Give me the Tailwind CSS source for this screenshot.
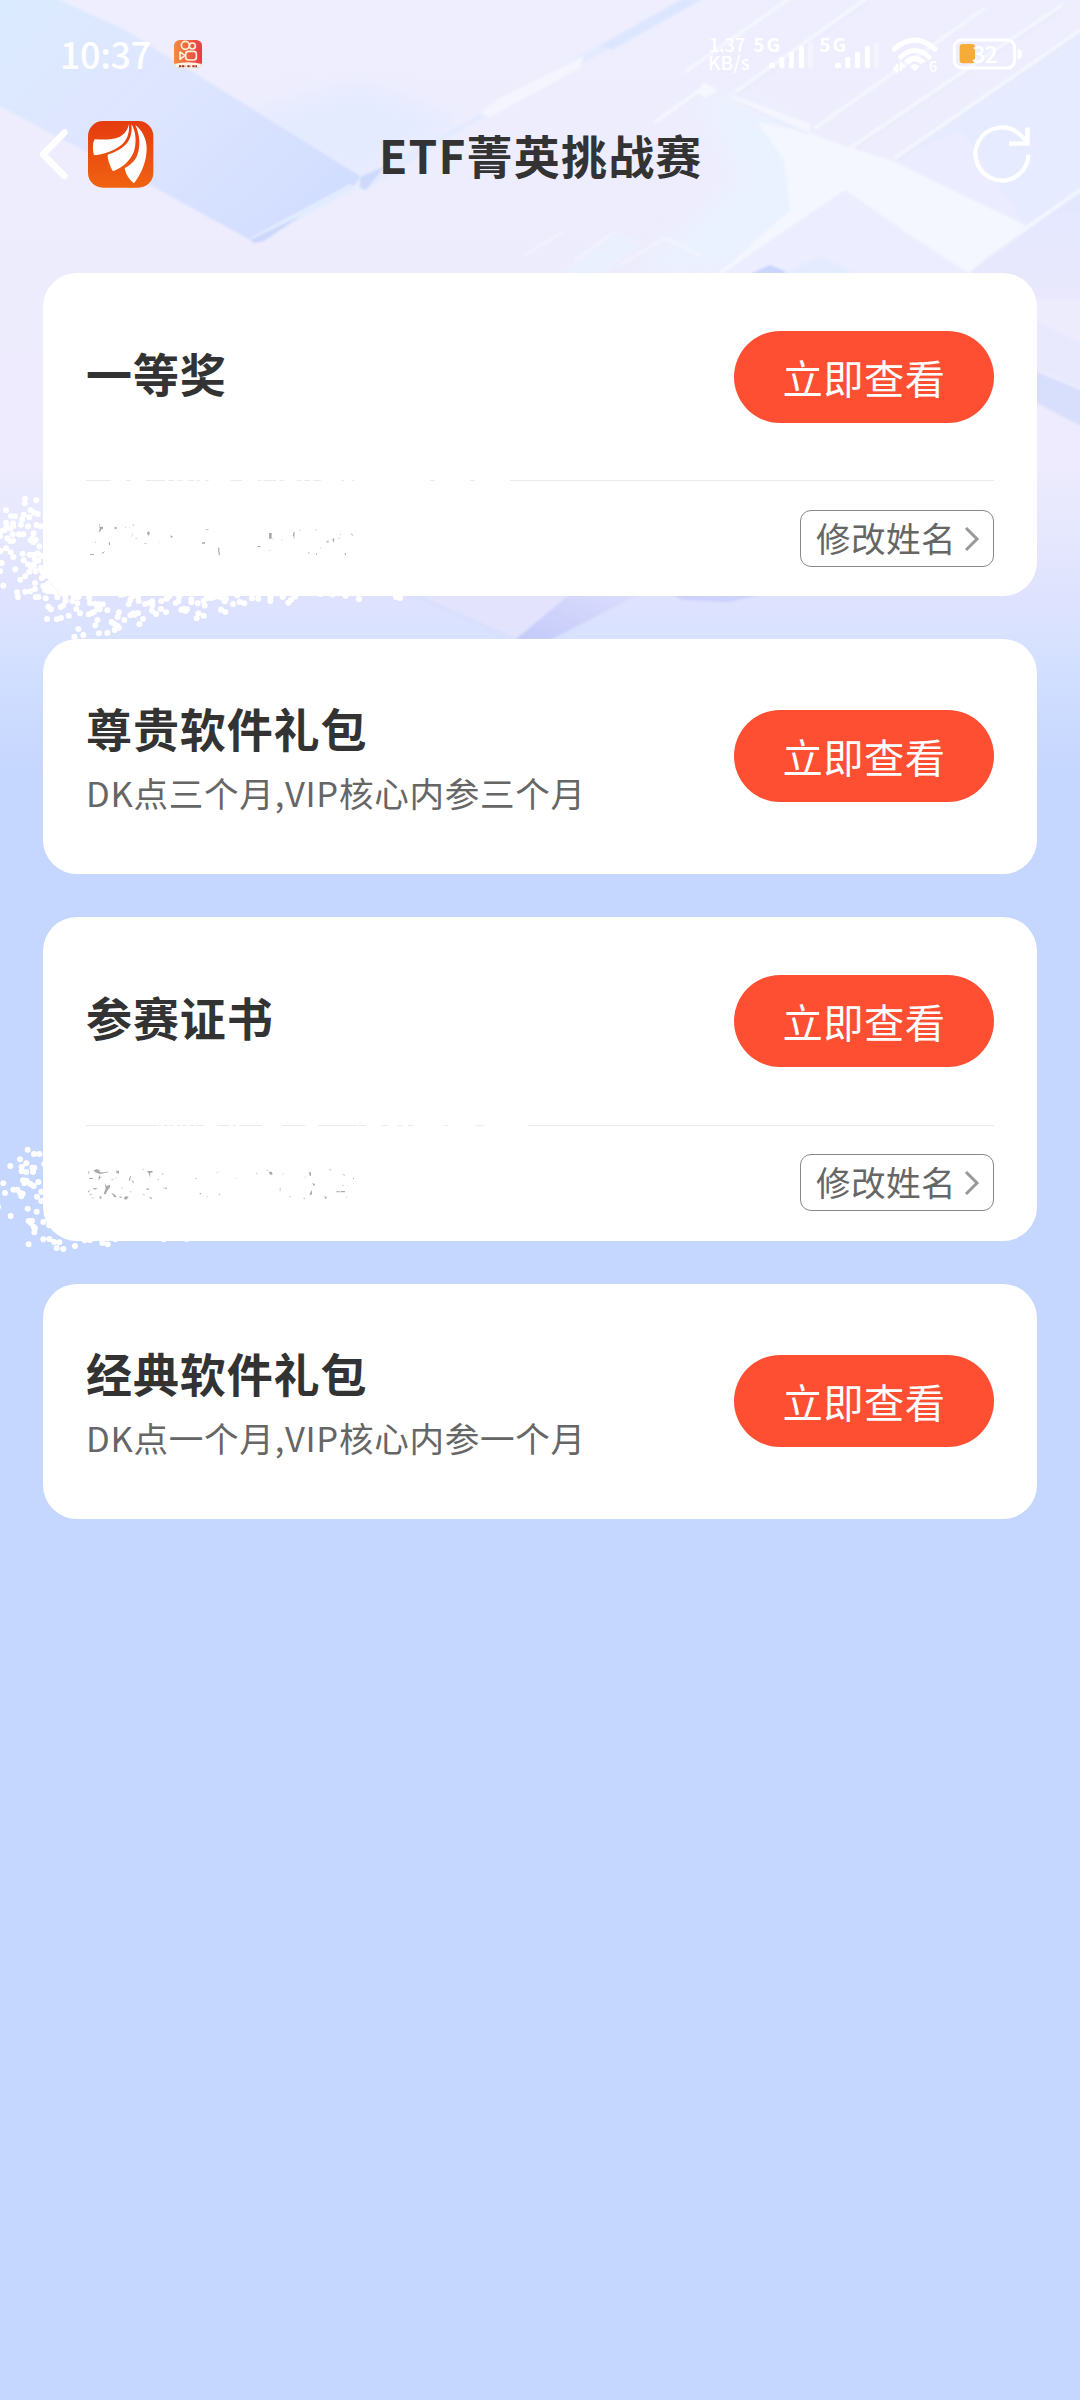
<!DOCTYPE html>
<html lang="zh-CN">
<head>
<meta charset="utf-8">
<title>ETF菁英挑战赛</title>
<script src="https://cdn.jsdelivr.net/npm/@tailwindcss/browser@4"></script>
</head>
<body class="bg-[#c5d6ff] font-['Noto_Sans_CJK_SC',sans-serif]">
<div class="relative w-[1080px] h-[2400px] overflow-hidden">

  <!-- decorative backdrop -->
  <svg class="absolute left-0 top-0" width="1080" height="780" viewBox="0 0 1080 780">
    <defs>
      <linearGradient id="sky" x1="0" y1="0" x2="0" y2="1">
        <stop offset="0" stop-color="#eeeefe"/><stop offset=".6" stop-color="#edebfd"/>
        <stop offset=".68" stop-color="#e6e8fe"/><stop offset=".77" stop-color="#dfe2fe"/>
        <stop offset=".82" stop-color="#d7e2ff"/><stop offset=".9" stop-color="#cddcff"/><stop offset="1" stop-color="#c5d6ff"/>
      </linearGradient>
      <linearGradient id="band" x1="0" y1="0" x2="1" y2=".7">
        <stop offset="0" stop-color="#dbebff"/><stop offset=".45" stop-color="#dfe6ff"/><stop offset="1" stop-color="#d2deff"/>
      </linearGradient>
      <linearGradient id="face" x1="0" y1="1" x2="1" y2="0">
        <stop offset="0" stop-color="#c3caf9"/><stop offset="1" stop-color="#dcddfd"/>
      </linearGradient>
      <linearGradient id="side" x1="0" y1="0" x2="0" y2="1">
        <stop offset="0" stop-color="#e3e8ff"/><stop offset="1" stop-color="#e9e8fd"/>
      </linearGradient>
      <filter id="soft" x="-20%" y="-20%" width="140%" height="140%"><feGaussianBlur stdDeviation="10"/></filter>
      <filter id="edge"><feGaussianBlur stdDeviation=".9"/></filter>
    </defs>
    <rect width="1080" height="780" fill="url(#sky)"/>
    <path d="M190 130L360 85L460 122L362 178Z" fill="#e5ebff" filter="url(#soft)"/>
    <path d="M700 90L790 120L850 190L720 273H640L740 180Z" fill="#ebf2ff" filter="url(#soft)"/>
    <g filter="url(#edge)">
      <path d="M-5 -5H48L125 30L360 176L356 184L252 241L150 185L-5 104Z" fill="url(#band)"/>
      <path d="M250 238L350 184L356 188L257 243Z" fill="#e3ecff"/>
      <path d="M250 240L302 215L264 241L254 243Z" fill="#cdd6fb"/>
      <path d="M360 178L460 125L590 50L684 -2H704L600 54L470 125L366 190Z" fill="#e5ebff"/>
      <path d="M360 177L385 166L366 190L360 188Z" fill="#ced9fc"/>
      <path d="M600 46L684 -2H704L612 50Z" fill="#dde6ff"/>
      <path d="M480 113L500 98L584 56L580 68L490 117Z" fill="#f5f5ff"/>
      <path d="M1085 28L895 160L1025 225L1085 188Z" fill="#e7ebff"/>
      <path d="M895 160L960 130L1025 225Z" fill="#ebecff"/>
      <path d="M1085 188L970 273L1000 300H1085Z" fill="url(#side)"/>
      <path d="M758 122L810 133L850 148L890 160L1025 225L968 273L905 232L845 190L720 273L790 210L784 160Z" fill="#f4f7ff"/>
      <path d="M845 190L905 232L968 273H720Z" fill="#ecedfe"/>
      <path d="M725 92L810 124V134L735 100Z" fill="#f4f5ff"/>
      <path d="M695 92L704 83L718 90L706 98Z" fill="#f6f8ff"/>
      <path d="M748 275L770 265L795 275Z" fill="#c9d5fc"/>
      <path d="M780 275L820 256L860 275Z" fill="#e5ebff"/>
      <path d="M560 275L618 233L640 245L600 275Z" fill="#ebf0ff"/>
      <path d="M525 255L562 232M575 260L615 232M620 265L665 238L700 255" fill="none" stroke="#f3f5ff" stroke-width="2"/>
      <path d="M655 122L700 90M685 72L790 -2M735 92L867 -2M815 128L985 8M850 148L1062 5M895 158L1085 27M720 273L845 188M968 268L1085 187" fill="none" stroke="#f4f8ff" stroke-width="3"/>
      <path d="M737 96L869 2M855 149L1064 8M898 160L1085 32M742 104L808 134" fill="none" stroke="#e8e9f9" stroke-width="1.500"/>
      <path d="M1035 371L1085 392V428L1035 402Z" fill="#d8dffc"/>
      <path d="M1035 320L1085 345V390L1035 368Z" fill="#e9e9fe"/>
      <path d="M417 594H580L515 638Z" fill="#e3e3fe"/>
      <path d="M417 594L515 638L510 640L405 594Z" fill="#d9e0fd"/>
      <path d="M515 640L570 594H640L550 640Z" fill="url(#face)"/>
      <path d="M672 594H765L728 602L682 600Z" fill="#cbd1fa"/>
    </g>
  </svg>

  <div class="relative">
    <!-- status bar -->
    <div class="flex h-[108px] items-start text-white">
      <div class="ml-[60px] mt-[31px] w-[114px] text-[36px] leading-[44px] font-medium tracking-[-0.4px]">10:37</div>
      <svg class="mt-[40px]" width="28" height="28" viewBox="0 0 84 84">
        <defs><linearGradient id="ks" x1="0" x2="1"><stop offset="0" stop-color="#f58b3e"/><stop offset="1" stop-color="#ea3a4a"/></linearGradient>
        <clipPath id="kc"><rect width="84" height="84" rx="17"/></clipPath></defs>
        <g clip-path="url(#kc)">
          <rect width="84" height="84" fill="url(#ks)"/>
          <path d="M0 72Q42 62 84 72V84H0Z" fill="#fff3e4"/>
          <path d="M15 79H34M40 79H50M55 79H69" stroke="#a33426" stroke-width="6" stroke-dasharray="7 2"/>
          <g fill="none" stroke="#fff1d6" stroke-width="5"><circle cx="34" cy="16" r="12"/><circle cx="55" cy="18" r="9"/><rect x="35" y="34" width="32" height="26" rx="8"/><path d="M18 36L33 46L18 58Z" stroke-linejoin="round"/></g>
        </g>
      </svg>
      <svg class="ml-[506px] mt-[35px] overflow-visible" width="45" height="38" viewBox="84 105 135 114" fill="#fff" font-weight="500" font-size="56">
        <text x="86" y="156" textLength="110">1.37</text>
        <text x="84" y="209" textLength="125">KB/s</text>
      </svg>
      <svg class="mt-[35px] overflow-visible" width="66" height="38" viewBox="219 105 198 114" fill="#fff">
        <text x="220" y="156" font-size="57" font-weight="700" textLength="80">5G</text>
        <rect x="267" y="188" width="18" height="17" rx="6"/><rect x="298" y="170" width="15" height="35" rx="6"/><rect x="327" y="155" width="15" height="50" rx="6"/><rect x="357" y="138" width="15" height="67" rx="6"/><rect x="384" y="125" width="15" height="80" rx="6" opacity=".35"/>
      </svg>
      <svg class="mt-[35px] overflow-visible" width="72" height="38" viewBox="219 105 216 114" fill="#fff">
        <text x="220" y="156" font-size="57" font-weight="700" textLength="80">5G</text>
        <rect x="267" y="188" width="18" height="17" rx="6"/><rect x="298" y="170" width="15" height="35" rx="6"/><rect x="327" y="155" width="15" height="50" rx="6"/><rect x="357" y="138" width="15" height="67" rx="6"/><rect x="384" y="125" width="15" height="80" rx="6" opacity=".35"/>
      </svg>
      <svg class="mt-[35px] overflow-visible" width="61" height="38" viewBox="633 105 183 114" fill="none" stroke="#fff">
        <path d="M643 147Q704 94 765 147M662 171Q704 132 747 171" stroke-width="15" stroke-linecap="round"/>
        <path d="M675 183Q704 156 735 183L722 190Q704 174 688 190Z" fill="#fff" stroke-width="4"/>
        <path d="M690 200Q704 184 719 200L705 213Z" fill="#fff" stroke="none"/>
        <path d="M641 202L651 213V191M663 213V191L674 203" stroke-width="8"/>
        <text x="746" y="215" font-size="44" font-weight="500" fill="#fff" stroke="none">6</text>
      </svg>
      <svg class="mt-[35px] overflow-visible" width="72" height="38" viewBox="816 105 216 114">
        <rect x="823" y="120" width="181" height="84" rx="22" fill="none" stroke="#fff" stroke-width="9"/>
        <rect x="839" y="132" width="46" height="58" rx="9" fill="#f6ad37"/>
        <path d="M1013 147Q1026 147 1026 162T1013 177Z" fill="#fff"/>
        <text x="877" y="188" font-size="69" font-weight="500" fill="#fff" textLength="76">32</text>
      </svg>
    </div>

    <!-- title bar -->
    <header class="flex h-[92px] items-center">
      <svg class="ml-[37px]" width="32" height="54" viewBox="0 0 32 54"><path d="M27.500 5.500L6 27.500L27.500 49" fill="none" stroke="#fff" stroke-width="6.500" stroke-linecap="round" stroke-linejoin="round"/></svg>
      <svg class="ml-[18px]" width="68" height="69" viewBox="261 359 204 207">
        <defs><linearGradient id="em" x1="0" y1="0" x2="0" y2="1"><stop offset="0" stop-color="#e53b0e"/><stop offset="1" stop-color="#f06311"/></linearGradient></defs>
        <rect x="264" y="362" width="196" height="200" rx="45" fill="url(#em)"/>
        <g fill="#fff">
          <path d="M387 371C384 387 374 401 360 409C335 420 310 418 284 417C277 428 278 450 282 465C320 460 352 447 371 427C386 411 388 389 387 371Z"/>
          <path d="M394 371C397 390 393 412 382 427C366 446 344 456 323 463C323 480 331 499 339 513C367 503 391 481 401 456C411 426 408 392 394 371Z"/>
          <path d="M406 374C419 402 423 438 411 466C403 484 388 496 374 503C377 522 388 538 402 549C425 520 440 482 440 444C440 415 426 389 406 374Z"/>
        </g>
      </svg>
      <h1 class="ml-[224px] w-[332px] mt-[-1px] whitespace-nowrap text-[46px] leading-[60px] font-bold tracking-[1.200px] text-[#333]">ETF菁英挑战赛</h1>
      <svg class="ml-[261px]" width="62" height="62" viewBox="0 0 62 62" fill="none" stroke="#fff" stroke-width="4.200"><path d="M56.500 31.500A26.500 26.500 0 1 1 48.500 12L55 19"/><path d="M55.500 4.500V20.500H37" stroke-width="4.500"/></svg>
    </header>

    <!-- prize cards -->
    <main class="mt-[73px] flex flex-col gap-[43px] px-[43px]">
      <section class="h-[323px] rounded-[34px] bg-white px-[43px]">
        <div class="flex h-[208px] items-center justify-between border-b border-[#ebebeb]">
          <h2 class="mt-[-10px] text-[46px] leading-[60px] font-bold tracking-[0.900px] text-[#333]">一等奖</h2>
          <button class="h-[92px] w-[260px] rounded-full bg-[#ff4f33] text-[40.300px] leading-[60px] tracking-[0.500px] text-white">立即查看</button>
        </div>
        <div class="flex h-[115px] items-center justify-end">
          <button class="flex h-[57px] w-[194px] items-center rounded-[11px] border border-[#888] pb-[4px] pl-[15px] text-[34.600px] leading-[50px] tracking-[0.400px] text-[#666]">修改姓名<svg class="ml-[5px] mt-[4px]" width="20" height="26" viewBox="0 0 20 26"><path d="M5 2L16 13L5 24" fill="none" stroke="#999" stroke-width="3"/></svg></button>
        </div>
      </section>

      <section class="flex h-[235px] items-center justify-between rounded-[34px] bg-white px-[43px]">
        <div class="mt-[1px]">
          <h2 class="text-[46px] leading-[70px] font-bold tracking-[0.900px] text-[#333]">尊贵软件礼包</h2>
          <p class="text-[34.600px] leading-[60px] tracking-[0.700px] text-[#666]">DK点三个月,VIP核心内参三个月</p>
        </div>
        <button class="mt-[-2px] h-[92px] w-[260px] rounded-full bg-[#ff4f33] text-[40.300px] leading-[60px] tracking-[0.500px] text-white">立即查看</button>
      </section>

      <section class="h-[324px] rounded-[34px] bg-white px-[43px]">
        <div class="flex h-[209px] items-center justify-between border-b border-[#ebebeb]">
          <h2 class="mt-[-10px] text-[46px] leading-[60px] font-bold tracking-[0.900px] text-[#333]">参赛证书</h2>
          <button class="h-[92px] w-[260px] rounded-full bg-[#ff4f33] text-[40.300px] leading-[60px] tracking-[0.500px] text-white">立即查看</button>
        </div>
        <div class="flex h-[115px] items-center justify-end">
          <button class="mt-[-2px] flex h-[57px] w-[194px] items-center rounded-[11px] border border-[#888] pb-[4px] pl-[15px] text-[34.600px] leading-[50px] tracking-[0.400px] text-[#666]">修改姓名<svg class="ml-[5px] mt-[4px]" width="20" height="26" viewBox="0 0 20 26"><path d="M5 2L16 13L5 24" fill="none" stroke="#999" stroke-width="3"/></svg></button>
        </div>
      </section>

      <section class="flex h-[235px] items-center justify-between rounded-[34px] bg-white px-[43px]">
        <div class="mt-[1px]">
          <h2 class="text-[46px] leading-[70px] font-bold tracking-[0.900px] text-[#333]">经典软件礼包</h2>
          <p class="text-[34.600px] leading-[60px] tracking-[0.700px] text-[#666]">DK点一个月,VIP核心内参一个月</p>
        </div>
        <button class="mt-[-2px] h-[92px] w-[260px] rounded-full bg-[#ff4f33] text-[40.300px] leading-[60px] tracking-[0.500px] text-white">立即查看</button>
      </section>
    </main>
  </div>

  <!-- spray-brush redaction over the name rows -->
  <svg class="absolute left-0 top-[460px] overflow-visible" width="420" height="200" viewBox="0 0 1260 600" fill="none">
    <path d="M332 61H378M392 61H438M495 61H504M522 61H532M548 61H564M582 61H590M600 61H616M626 61H692M726 61H774M784 61H790M828 61H838M852 61H890M905 61H912M930 61H940M963 61H1024M1032 61H1056M1063 61H1290M1305 61H1410M1425 61H1530" stroke="#fff" stroke-width="9"/>
    <path stroke="#fff" stroke-width="18" stroke-linecap="round" d="M75 116h0M74 130h0M109 121h0M18 151h0M33 168h0M45 169h0M71 164h0M92 151h0M102 158h0M113 162h0M66 179h0M88 172h0M18 188h0M39 190h0M20 201h0M31 205h0M40 198h0M63 194h0M84 199h0M110 195h0M122 199h0M4 213h0M14 210h0M0 228h0M38 223h0M57 223h0M70 223h0M101 220h0M22 235h0M30 243h0M39 242h0M92 241h0M100 246h0M107 240h0M98 235h0M118 259h0M2 273h0M18 265h0M32 277h0M40 291h0M68 281h0M71 301h0M89 284h0M101 284h0M113 280h0M124 288h0M104 295h0M115 302h0M84 313h0M92 318h0M102 312h0M101 320h0M5 309h0M0 334h0M46 328h0M88 335h0M107 334h0M122 323h0M127 335h0M61 359h0M75 349h0M125 354h0M134 348h0M10 377h0M105 369h0M105 387h0M75 395h0M91 394h0M51 397h0M54 411h0M107 411h0M115 411h0M137 415h0M130 378h0M143 372h0M135 390h0M148 382h0M157 388h0M166 396h0M172 412h0M143 394h0M184 398h0M196 408h0M192 400h0M154 393h0M145 440h0M153 448h0M141 477h0M170 478h0M183 474h0M206 467h0M182 441h0M190 436h0M197 422h0M217 424h0M222 412h0M235 411h0M232 430h0M229 447h0M240 460h0M223 530h0M235 507h0M250 525h0M268 415h0M270 430h0M285 431h0M296 433h0M308 433h0M292 445h0M299 448h0M266 463h0M274 460h0M282 456h0M322 451h0M292 480h0M286 496h0M297 520h0M322 519h0M335 486h0M344 510h0M357 503h0M351 497h0M357 457h0M353 471h0M373 480h0M342 491h0M391 466h0M400 460h0M414 459h0M404 464h0M418 493h0M429 477h0M362 404h0M371 403h0M391 419h0M386 433h0M397 408h0M414 411h0M416 423h0M435 432h0M450 428h0M457 424h0M457 436h0M456 452h0M468 462h0M483 447h0M498 457h0M484 423h0M500 416h0M508 408h0M527 429h0M535 424h0M538 410h0M544 449h0M552 446h0M557 453h0M561 448h0M574 418h0M574 427h0M593 430h0M614 437h0M611 422h0M620 415h0M634 414h0M646 410h0M662 412h0M678 417h0M674 424h0M699 432h0M719 426h0M733 430h0M712 406h0M663 449h0M676 456h0M595 460h0M590 475h0M611 467h0M756 415h0M775 416h0M811 411h0M811 423h0M848 411h0M865 428h0M873 420h0M885 410h0M961 402h0M998 403h0M1037 407h0M1077 417h0M1188 411h0M1200 414h0"/>
    <g fill="#aaa">
      <path d="M297 192h2v8h10v8h-6v4l-5 4h-2l3-8zM343 202h8v4h-8zM441 219l4-5 4 2v6l-5 6zM512 226l7 4-4 4-3-4zM606 247h9v4h-9zM654 263h4v10l2 10-3 4-2-12zM807 219h8v17h-8zM773 258h8v3h-8zM881 216h3v8h-1v12h-2v-8h-3zM998 234l5 3-2 12-3-8zM1051 220l7 3v5zM270 282h12v3h-12zM306 278l9-5-4 6-5 2zM326 247h4v8h-3zM1034 280h4v6h-3zM948 280h3v4h-3zM925 277h3v4h-3z"/>
      <path d="M375 200h3v3h-3zM388 200h2v3h-2zM398 193h4v4h-4zM396 217l2 8-3 8zM285 245h3v3h-3zM432 250h9v2h-9zM406 234h6v2h-6zM616 207h10v3h-10zM818 234l4 4h-5zM805 272l10-3-8 5zM897 211h5v2h-5zM945 208h4v3h-4zM978 244l8-4v8h-6zM1014 235l8-4-6 7zM1020 224l3-5v7zM844 238h3v3h-3zM961 261h2v4h-2zM477 245h4v2h-4z" opacity=".6"/>
    </g>
  </svg>
  <svg class="absolute left-0 top-[1100px] overflow-visible" width="420" height="180" viewBox="0 0 1260 540" fill="none">
    <path d="M470 76H475M483 76H491M506 76H510M520 76H530M542 76H548M560 76H568M583 76H588M612 76H652M688 76H698M706 76H718M786 76H846M916 76H955M1070 76H1075M1098 76H1144M1165 76H1192M1208 76H1224M1240 76H1330M1345 76H1430M1450 76H1585" stroke="#fff" stroke-width="9"/>
    <path stroke="#fff" stroke-width="18" stroke-linecap="round" d="M83 149h0M102 162h0M118 162h0M60 178h0M31 198h0M79 190h0M65 201h0M65 214h0M79 216h0M97 203h0M103 203h0M99 216h0M133 192h0M10 250h0M15 279h0M69 241h0M80 242h0M73 250h0M91 252h0M115 246h0M101 258h0M40 269h0M52 269h0M60 278h0M68 281h0M64 289h0M124 275h0M111 290h0M124 303h0M-6 321h0M83 326h0M110 335h0M32 348h0M86 363h0M96 363h0M93 370h0M130 366h0M147 376h0M101 380h0M105 385h0M103 397h0M130 418h0M148 417h0M162 426h0M178 427h0M86 433h0M170 444h0M190 447h0M225 438h0M254 421h0M270 420h0M307 429h0M323 433h0M346 418h0M491 418h0M560 417h0"/>
    <g fill="#aaa">
      <path d="M280 212l10-5 8 3 2 7h10l14-2-1-10 2 12-25 5-10-3zM348 212h9v9l-7-2zM441 213h17v4l-8 2 1 15-5-14zM296 232l3-8 2 8-5 10zM267 234h12v3h-12zM278 264l15 1-8 4zM314 249l5 9 11-4v8l-9 12-4 9-6-1 6-17zM334 278l9 5 7 8-7 1zM372 293l6-5 8 3-7 8-6-1zM264 274l7-5-5 9zM268 284l8-3-3 5zM274 293h8v2h-8zM299 289h5v7h-5zM358 289l11 3-10 2zM439 265l9 1v3h-9zM486 263h15v5l-8-3zM427 281l7 3-1 3zM447 289l10 6-4 3zM386 241l3-10 5-5-5 17zM393 240l8 4v6zM806 215h9l3 8-7 2zM927 217h6v12l-5-4zM937 248l9 5-5 6zM929 282l7-13v14l-6 3zM973 289l8 2-4 7zM1009 274h12v3h-12zM1023 273h12v4h-12zM1027 222l7 2v4zM1059 234h3v4h-3zM1038 290l3 3-3 1zM655 281l7 1-4 3zM599 279h4v4h-4z"/>
      <path d="M264 213h4v8h-4zM300 231h5v3h-5zM345 235l6-3-4 5zM334 238h7v3h-7zM363 262h4v3h-4zM389 274h5v3h-5zM430 205l-3 4 5 2zM486 220h4v4h-4zM473 236h4v4h-4zM585 234h5v3h-5zM646 220l15-7-11 7zM768 218h4v4h-4zM800 209h4v4h-4zM847 222l4-4-2 6zM987 208h7v3h-7zM916 227l-3 9 4-4zM1027 254h4v4h-4zM705 233h5v2h-5zM618 288l6 1-4 3zM868 289h5v3h-5zM910 293h5v4h-5zM839 263h3v11h-3z" opacity=".6"/>
    </g>
  </svg>
</div>
</body>
</html>
